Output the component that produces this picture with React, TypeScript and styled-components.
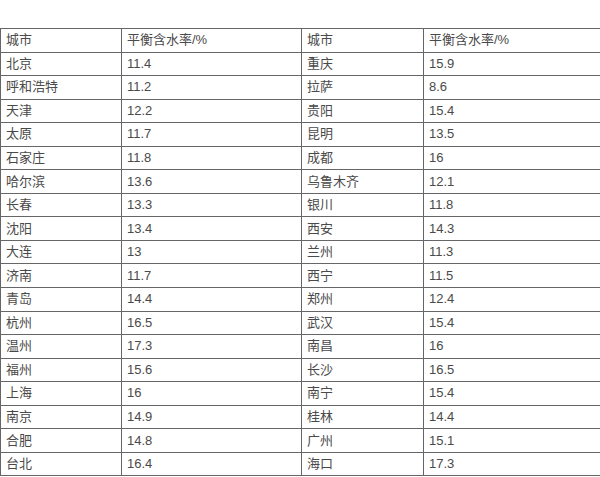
import React from "react";
import styled, { createGlobalStyle } from "styled-components";

const Global = createGlobalStyle`
  html, body { margin: 0; padding: 0; background: #fff; overflow: hidden; }
  body { font-family: "Liberation Sans", "Noto Sans CJK SC", sans-serif; }
`;

const Page = styled.div`
  padding-top: 28px;
  width: 600px;
  overflow: hidden;
`;

const Table = styled.table`
  border-collapse: collapse;
  table-layout: fixed;
  width: 603px;
  margin-left: 0;
  border-top: 1px solid #333;
`;

const Cell = styled.td<{ $w: number }>`
  width: ${(p) => p.$w}px;
  height: 23.55px;
  padding: 0 0 0 5px;
  border: 1px solid #666;
  font-size: 13px;
  line-height: 16px;
  color: #4a4a4a;
  white-space: nowrap;
  overflow: hidden;
  vertical-align: middle;
  box-sizing: border-box;
`;

const widths = [121, 180, 122, 180];

const data: [string, string, string, string][] = [
  ["城市", "平衡含水率/%", "城市", "平衡含水率/%"],
  ["北京", "11.4", "重庆", "15.9"],
  ["呼和浩特", "11.2", "拉萨", "8.6"],
  ["天津", "12.2", "贵阳", "15.4"],
  ["太原", "11.7", "昆明", "13.5"],
  ["石家庄", "11.8", "成都", "16"],
  ["哈尔滨", "13.6", "乌鲁木齐", "12.1"],
  ["长春", "13.3", "银川", "11.8"],
  ["沈阳", "13.4", "西安", "14.3"],
  ["大连", "13", "兰州", "11.3"],
  ["济南", "11.7", "西宁", "11.5"],
  ["青岛", "14.4", "郑州", "12.4"],
  ["杭州", "16.5", "武汉", "15.4"],
  ["温州", "17.3", "南昌", "16"],
  ["福州", "15.6", "长沙", "16.5"],
  ["上海", "16", "南宁", "15.4"],
  ["南京", "14.9", "桂林", "14.4"],
  ["合肥", "14.8", "广州", "15.1"],
  ["台北", "16.4", "海口", "17.3"],
];

export default function App() {
  return (
    <>
      <Global />
      <Page>
        <Table>
          <tbody>
            {data.map((row, i) => (
              <tr key={i}>
                {row.map((c, j) => (
                  <Cell key={j} $w={widths[j]}>
                    {c}
                  </Cell>
                ))}
              </tr>
            ))}
          </tbody>
        </Table>
      </Page>
    </>
  );
}
